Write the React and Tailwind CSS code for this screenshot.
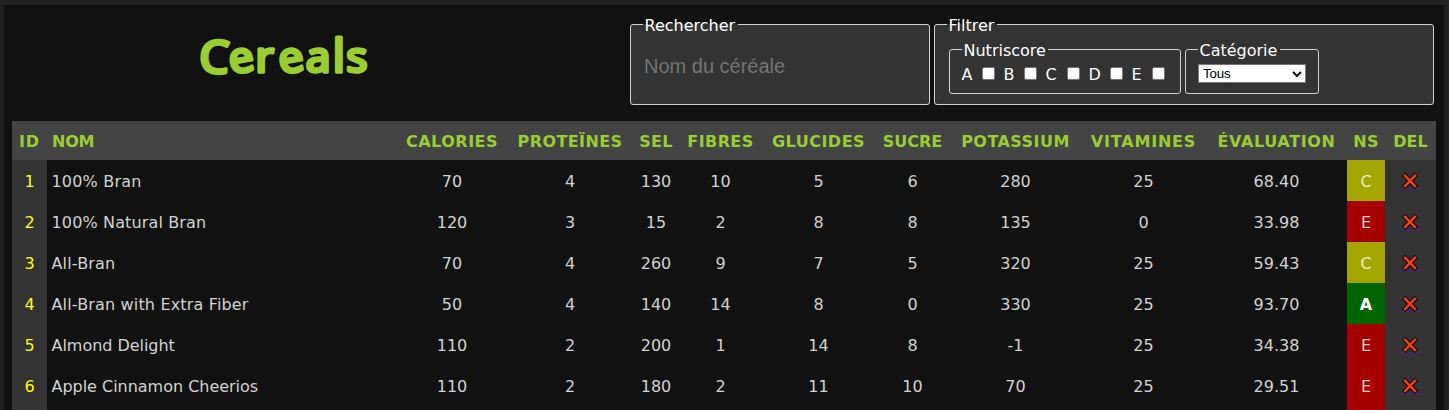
import React from "react";

const columns = [
  { label: "ID", width: "w-[35px]", text: "tracking-[0.8px]" },
  { label: "NOM", width: "w-[350px]", text: "tracking-[-0.2px]" },
  { label: "CALORIES", width: "w-[110px]", text: "tracking-[0.5px]" },
  { label: "PROTEÏNES", width: "w-[126px]", text: "tracking-[0.4px]" },
  { label: "SEL", width: "w-[46px]", text: "tracking-[0.3px]" },
  { label: "FIBRES", width: "w-[83px]", text: "tracking-[0.4px]" },
  { label: "GLUCIDES", width: "w-[113px]", text: "tracking-[0.5px]" },
  { label: "SUCRE", width: "w-[75px]", text: "tracking-[0px]" },
  { label: "POTASSIUM", width: "w-[131px]", text: "tracking-[0.45px]" },
  { label: "VITAMINES", width: "w-[125px]", text: "tracking-[0.8px]" },
  { label: "ÉVALUATION", width: "w-[141px]", text: "tracking-[0.65px]" },
  { label: "NS", width: "w-[38px]", text: "tracking-[0.3px]" },
  { label: "DEL", width: "w-[51px]", text: "tracking-[0px]" },
];

const cereals = [
  { id: 1, name: "100% Bran", text: "tracking-[0.18px]", values: ["70", "4", "130", "10", "5", "6", "280", "25", "68.40"], ns: "C" },
  { id: 2, name: "100% Natural Bran", text: "tracking-[0.14px]", values: ["120", "3", "15", "2", "8", "8", "135", "0", "33.98"], ns: "E" },
  { id: 3, name: "All-Bran", text: "tracking-[0.15px]", values: ["70", "4", "260", "9", "7", "5", "320", "25", "59.43"], ns: "C" },
  { id: 4, name: "All-Bran with Extra Fiber", text: "tracking-[0.16px]", values: ["50", "4", "140", "14", "8", "0", "330", "25", "93.70"], ns: "A" },
  { id: 5, name: "Almond Delight", text: "tracking-[-0.03px]", values: ["110", "2", "200", "1", "14", "8", "-1", "25", "34.38"], ns: "E" },
  { id: 6, name: "Apple Cinnamon Cheerios", text: "tracking-[-0.02px]", values: ["110", "2", "180", "2", "11", "10", "70", "25", "29.51"], ns: "E" },
];

const scoreStyles = {
  A: "bg-[#006400] text-white font-bold",
  C: "bg-[#a5a500] text-[#ededcc]",
  E: "bg-[#a50000] text-[#edcccc]",
};

const scores = [
  { letter: "A", width: "w-[33px]" },
  { letter: "B", width: "w-[33px]" },
  { letter: "C", width: "w-[34px]" },
  { letter: "D", width: "w-[34px]" },
  { letter: "E", width: "w-[33px]" },
];

function Group({ title, className, children }) {
  return (
    <fieldset className={`rounded-[3px] border border-[#d3d3d3] bg-[#333] ${className}`}>
      <legend className="px-[2px] text-[16px] leading-[19px] text-white">
        <span className="inline-block -translate-x-[0.5px] translate-y-px">{title}</span>
      </legend>
      {children}
    </fieldset>
  );
}

function Logo() {
  return (
    <svg className="h-[80px] w-[176px]" viewBox="196 15 176 80">
      <text
        transform="scale(1.05 1)"
        y="72"
        fontFamily="'Noto Sans', sans-serif"
        fontSize="42"
        fontWeight="400"
        fill="#9acd32"
        stroke="#9acd32"
        strokeWidth="3.5"
        strokeLinejoin="round"
        x="189 220.3 243.3 267.6 291.2 317 329.8"
        dy="0 2 -2 2 -2 0 0"
        rotate="3 -10 0 -10 0 0 0"
      >
        <tspan fontSize="45">C</tspan>erea<tspan fontSize="45">l</tspan>s
      </text>
    </svg>
  );
}

function DeleteIcon() {
  return (
    <svg className="block h-[18px] w-[22px]" viewBox="0 0 22 18" fill="none">
      <path d="M0 16.5H21" stroke="#551a8b" />
      <path d="M3.6 2.3L16.4 15.5M16.4 2.3L3.6 15.5" stroke="#0c0c0c" strokeWidth="4.8" />
      <path d="M4.2 2.9L15.8 14.9M15.8 2.9L4.2 14.9" stroke="#f43c17" strokeWidth="2.6" />
    </svg>
  );
}

export default function App() {
  return (
    <div className="h-[410px] w-[1449px] overflow-hidden bg-[#222] pl-[4px] pr-[5px] pt-[5px] font-['DejaVu_Sans',sans-serif] text-[16px] leading-[19px] text-[#d3d3d3]">
      <div className="h-[405px] overflow-hidden bg-[#111] px-2">
        <header className="flex h-[116px] pt-[10px]">
          <h1 className="flex w-[618px] justify-center pr-[74px]">
            <Logo />
          </h1>
          <Group title="Rechercher" className="h-[90px] w-[300px] pl-[12px]">
            <input
              className="ml-[1px] mt-[17px] block h-[30px] w-[270px] bg-transparent font-['Liberation_Sans',sans-serif] text-[20px] outline-none placeholder:text-[#757575]"
              placeholder="Nom du céréale"
            />
          </Group>
          <Group title="Filtrer" className="ml-1 h-[90px] w-[500px] pl-[12px]">
            <div className="ml-[2px] mt-[6px] flex gap-1">
              <Group title="Nutriscore" className="h-[54px] w-[232px] pl-[12px]">
                <div className="mt-[5px] flex gap-[9px] text-white">
                  {scores.map((s) => (
                    <label key={s.letter} className={`flex items-start justify-between ${s.width}`}>
                      <span className="-ml-[0.5px] pt-px">{s.letter}</span>
                      <input type="checkbox" className="mt-[3px] h-[13px] w-[13px] appearance-none rounded-[2px] border border-[#767676] bg-white" />
                    </label>
                  ))}
                </div>
              </Group>
              <Group title="Catégorie" className="h-[54px] w-[134px] pl-[12px]">
                <div className="mt-[5px] grid h-[19px] w-[108px]">
                  <select className="col-start-1 row-start-1 h-[19px] appearance-none border border-[#767676] bg-white pl-[4px] font-['Liberation_Sans',sans-serif] text-[13.333px] leading-[17px] tracking-[-0.2px] text-black">
                    <option>Tous</option>
                  </select>
                  <svg className="pointer-events-none col-start-1 row-start-1 mr-[4px] h-[8px] w-[10px] self-center justify-self-end" viewBox="0 0 10 8" fill="none">
                    <path d="M1 2L5 6L9 2" stroke="#111" strokeWidth="2" />
                  </svg>
                </div>
              </Group>
            </div>
          </Group>
        </header>
        <table className="w-[1424px] table-fixed border-collapse text-center">
          <thead>
            <tr className="h-[39px] bg-[#444] text-[#9acd32]">
              {columns.map((c) => (
                <th key={c.label} className={`whitespace-nowrap p-0 pt-[2px] font-bold ${c.width} ${c.label === "NOM" ? "pl-[5px] text-left" : ""}`}>
                  <span className={`inline-flex ${c.text}`}>{c.label}</span>
                </th>
              ))}
            </tr>
          </thead>
          <tbody>
            {cereals.map((c) => (
              <tr key={c.id} className="h-[41px]">
                <td className="bg-[#333] p-0 pt-[2px] text-[#ff0]">{c.id}</td>
                <td className={`p-0 pl-[4.5px] pt-[2px] text-left ${c.text}`}>{c.name}</td>
                {c.values.map((v, i) => (
                  <td key={i} className="p-0 pt-[2px]">{v}</td>
                ))}
                <td className={`p-0 pt-[2px] ${scoreStyles[c.ns]}`}>{c.ns}</td>
                <td className="bg-[#333] p-0 pt-px">
                  <a className="flex justify-center" aria-label="Supprimer">
                    <DeleteIcon />
                  </a>
                </td>
              </tr>
            ))}
            <tr className="h-[41px]">
              <td className="bg-[#333]" />
              <td colSpan={10} />
              <td className="bg-[#a50000]" />
              <td className="bg-[#333]" />
            </tr>
          </tbody>
        </table>
      </div>
    </div>
  );
}
